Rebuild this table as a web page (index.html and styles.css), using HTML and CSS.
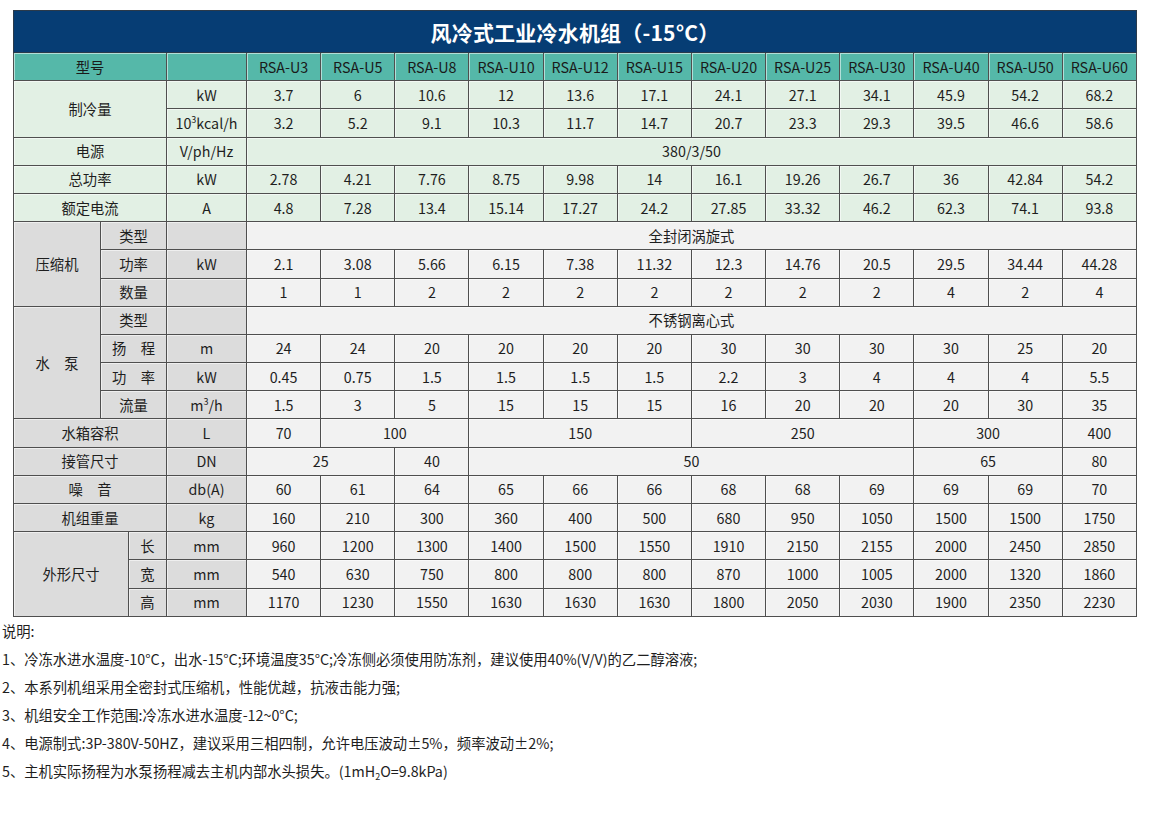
FILE: index.html
```html
<!DOCTYPE html>
<html lang="zh-CN">
<head>
<meta charset="utf-8">
<title>风冷式工业冷水机组（-15°C）</title>
<link rel="stylesheet" href="styles.css">
</head>
<body>
<div class="page">
<table class="spec">
  <colgroup>
    <col class="c-a"><col class="c-b"><col class="c-c"><col class="c-unit">
    <col span="12" class="c-data">
  </colgroup>
  <tbody>
    <tr class="title-row"><td colspan="16">风冷式工业冷水机组（-15°C）</td></tr>
    <tr class="head">
      <td colspan="3">型号</td><td></td>
      <td>RSA-U3</td><td>RSA-U5</td><td>RSA-U8</td><td>RSA-U10</td><td>RSA-U12</td><td>RSA-U15</td><td>RSA-U20</td><td>RSA-U25</td><td>RSA-U30</td><td>RSA-U40</td><td>RSA-U50</td><td>RSA-U60</td>
    </tr>
    <tr class="green">
      <td colspan="3" rowspan="2">制冷量</td><td>kW</td>
      <td>3.7</td><td>6</td><td>10.6</td><td>12</td><td>13.6</td><td>17.1</td><td>24.1</td><td>27.1</td><td>34.1</td><td>45.9</td><td>54.2</td><td>68.2</td>
    </tr>
    <tr class="green">
      <td>10<sup class="sup">3</sup>kcal/h</td>
      <td>3.2</td><td>5.2</td><td>9.1</td><td>10.3</td><td>11.7</td><td>14.7</td><td>20.7</td><td>23.3</td><td>29.3</td><td>39.5</td><td>46.6</td><td>58.6</td>
    </tr>
    <tr class="green">
      <td colspan="3">电源</td><td>V/ph/Hz</td><td colspan="12">380/3/50</td>
    </tr>
    <tr class="green">
      <td colspan="3">总功率</td><td>kW</td>
      <td>2.78</td><td>4.21</td><td>7.76</td><td>8.75</td><td>9.98</td><td>14</td><td>16.1</td><td>19.26</td><td>26.7</td><td>36</td><td>42.84</td><td>54.2</td>
    </tr>
    <tr class="green">
      <td colspan="3">额定电流</td><td>A</td>
      <td>4.8</td><td>7.28</td><td>13.4</td><td>15.14</td><td>17.27</td><td>24.2</td><td>27.85</td><td>33.32</td><td>46.2</td><td>62.3</td><td>74.1</td><td>93.8</td>
    </tr>
    <tr class="grey">
      <td rowspan="3" class="lab">压缩机</td><td colspan="2" class="lab">类型</td><td class="lab"></td><td colspan="12">全封闭涡旋式</td>
    </tr>
    <tr class="grey">
      <td colspan="2" class="lab">功率</td><td class="lab">kW</td>
      <td>2.1</td><td>3.08</td><td>5.66</td><td>6.15</td><td>7.38</td><td>11.32</td><td>12.3</td><td>14.76</td><td>20.5</td><td>29.5</td><td>34.44</td><td>44.28</td>
    </tr>
    <tr class="grey">
      <td colspan="2" class="lab">数量</td><td class="lab"></td>
      <td>1</td><td>1</td><td>2</td><td>2</td><td>2</td><td>2</td><td>2</td><td>2</td><td>2</td><td>4</td><td>2</td><td>4</td>
    </tr>
    <tr class="grey">
      <td rowspan="4" class="lab">水　泵</td><td colspan="2" class="lab">类型</td><td class="lab"></td><td colspan="12">不锈钢离心式</td>
    </tr>
    <tr class="grey">
      <td colspan="2" class="lab">扬　程</td><td class="lab">m</td>
      <td>24</td><td>24</td><td>20</td><td>20</td><td>20</td><td>20</td><td>30</td><td>30</td><td>30</td><td>30</td><td>25</td><td>20</td>
    </tr>
    <tr class="grey">
      <td colspan="2" class="lab">功　率</td><td class="lab">kW</td>
      <td>0.45</td><td>0.75</td><td>1.5</td><td>1.5</td><td>1.5</td><td>1.5</td><td>2.2</td><td>3</td><td>4</td><td>4</td><td>4</td><td>5.5</td>
    </tr>
    <tr class="grey">
      <td colspan="2" class="lab">流量</td><td class="lab">m<sup class="sup">3</sup>/h</td>
      <td>1.5</td><td>3</td><td>5</td><td>15</td><td>15</td><td>15</td><td>16</td><td>20</td><td>20</td><td>20</td><td>30</td><td>35</td>
    </tr>
    <tr class="grey">
      <td colspan="3" class="lab">水箱容积</td><td class="lab">L</td>
      <td>70</td><td colspan="2">100</td><td colspan="3">150</td><td colspan="3">250</td><td colspan="2">300</td><td>400</td>
    </tr>
    <tr class="grey">
      <td colspan="3" class="lab">接管尺寸</td><td class="lab">DN</td>
      <td colspan="2">25</td><td>40</td><td colspan="6">50</td><td colspan="2">65</td><td>80</td>
    </tr>
    <tr class="grey">
      <td colspan="3" class="lab">噪　音</td><td class="lab">db(A)</td>
      <td>60</td><td>61</td><td>64</td><td>65</td><td>66</td><td>66</td><td>68</td><td>68</td><td>69</td><td>69</td><td>69</td><td>70</td>
    </tr>
    <tr class="grey">
      <td colspan="3" class="lab">机组重量</td><td class="lab">kg</td>
      <td>160</td><td>210</td><td>300</td><td>360</td><td>400</td><td>500</td><td>680</td><td>950</td><td>1050</td><td>1500</td><td>1500</td><td>1750</td>
    </tr>
    <tr class="grey">
      <td colspan="2" rowspan="3" class="lab">外形尺寸</td><td class="lab">长</td><td class="lab">mm</td>
      <td>960</td><td>1200</td><td>1300</td><td>1400</td><td>1500</td><td>1550</td><td>1910</td><td>2150</td><td>2155</td><td>2000</td><td>2450</td><td>2850</td>
    </tr>
    <tr class="grey">
      <td class="lab">宽</td><td class="lab">mm</td>
      <td>540</td><td>630</td><td>750</td><td>800</td><td>800</td><td>800</td><td>870</td><td>1000</td><td>1005</td><td>2000</td><td>1320</td><td>1860</td>
    </tr>
    <tr class="grey">
      <td class="lab">高</td><td class="lab">mm</td>
      <td>1170</td><td>1230</td><td>1550</td><td>1630</td><td>1630</td><td>1630</td><td>1800</td><td>2050</td><td>2030</td><td>1900</td><td>2350</td><td>2230</td>
    </tr>
  </tbody>
</table>
<div class="notes">
  <p>说明:</p>
  <p>1、冷冻水进水温度-10°C，出水-15°C;环境温度35°C;冷冻侧必须使用防冻剂，建议使用40%(V/V)的乙二醇溶液;</p>
  <p>2、本系列机组采用全密封式压缩机，性能优越，抗液击能力强;</p>
  <p>3、机组安全工作范围:冷冻水进水温度-12~0°C;</p>
  <p>4、电源制式:3P-380V-50HZ，建议采用三相四制，允许电压波动±5%，频率波动±2%;</p>
  <p>5、主机实际扬程为水泵扬程减去主机内部水头损失。(1mH<sub class="sub">2</sub>O=9.8kPa)</p>
</div>
</div>
</body>
</html>
```
FILE: styles.css
```css
html, body {
  margin: 0;
  padding: 0;
  background: #ffffff;
}
body {
  font-family: "Noto Sans CJK SC", "Noto Sans", sans-serif;
  color: #1e1e1e;
}
.page {
  padding-top: 10px;
}
.spec {
  margin-left: 13px;
  width: 1124px;
  table-layout: fixed;
  border-collapse: collapse;
  font-size: 14.3px;
}
.c-a { width: 87px; }
.c-b { width: 28px; }
.c-c { width: 38px; }
.c-unit { width: 80px; }
.spec td {
  border: 1px solid #4f4f4f;
  text-align: center;
  vertical-align: middle;
  padding: 0;
  height: 27.2px;
  line-height: 18px;
  white-space: nowrap;
  box-shadow: inset 1px 1px 0 rgba(255,255,255,0.55);
}
.title-row td {
  background: #063d74;
  color: #ffffff;
  font-size: 21px;
  font-weight: bold;
  height: 41px;
  border-color: #2b3a4a;
  box-shadow: none;
  letter-spacing: 0.2px;
}
.head td {
  background: #55b8a9;
  color: #1a1a1a;
}
.green td {
  background: #e2f0e4;
}
.grey td {
  background: #f2f2f2;
}
.grey td.lab {
  background: #dcdcdc;
}
.sup {
  font-size: 9px;
  vertical-align: 6px;
  line-height: 0;
}
.sub {
  font-size: 9px;
  vertical-align: -3px;
  line-height: 0;
}
.notes {
  padding-left: 2px;
  font-size: 14.3px;
  color: #1e1e1e;
}
.notes p {
  margin: 0;
  line-height: 28px;
}
```
